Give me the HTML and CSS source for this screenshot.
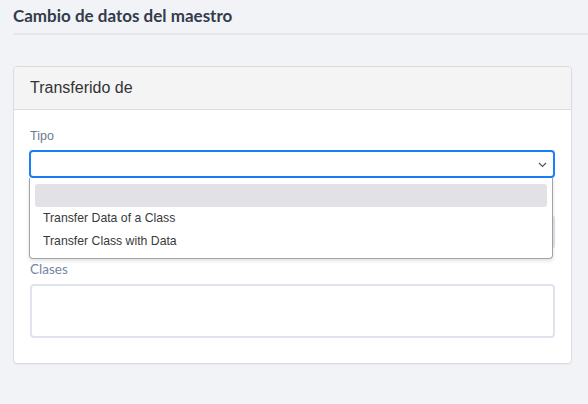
FILE: index.html
```html
<!DOCTYPE html>
<html lang="es">
<head>
<meta charset="utf-8">
<title>Cambio de datos del maestro</title>
<link rel="stylesheet" href="styles.css">
</head>
<body>
<div class="page-head">
  <h1 class="title">Cambio de datos del maestro</h1>
</div>
<div class="divider"></div>
<div class="card">
  <div class="card-header">Transferido de</div>
  <div class="card-body">
    <div class="group">
      <div class="label">Tipo</div>
      <div class="select-wrap">
        <div class="select">
          <svg class="chev" width="9" height="6" viewBox="0 0 9 6"><polyline points="1,1 4.5,4.5 8,1" fill="none" stroke="#555" stroke-width="1.2"/></svg>
        </div>
        <div class="menu">
          <div class="opt active">&nbsp;</div>
          <div class="opt">Transfer Data of a Class</div>
          <div class="opt">Transfer Class with Data</div>
        </div>
      </div>
    </div>
    <div class="group">
      <div class="label">Clase</div>
      <div class="input"></div>
    </div>
    <div class="group last">
      <div class="label lato">Clases</div>
      <div class="textbox"></div>
    </div>
  </div>
</div>
</body>
</html>
```
FILE: styles.css
```css
html, body { margin: 0; padding: 0; }
body {
  background: #f2f3f7;
  width: 588px;
  height: 404px;
  overflow: hidden;
  font-family: "Liberation Sans", Arial, sans-serif;
}
.page-head { padding: 4px 0 0 13px; height: 29px; }
.title {
  margin: 0;
  font-family: Lato, "Liberation Sans", sans-serif;
  font-weight: 700;
  font-size: 17px;
  line-height: 24px;
  color: #323c4b;
}
.divider { margin-left: 13px; height: 2px; background: #e6e7eb; }
.card {
  margin: 31px 16px 0 13px;
  background: #fff;
  border: 1px solid #dcdcdf;
  border-radius: 4px;
  box-shadow: 0 1px 1px rgba(0,0,0,0.04);
}
.card-header {
  height: 42px;
  line-height: 42px;
  padding-left: 16px;
  font-size: 16px;
  color: #333;
  background: #f4f4f5;
  border-bottom: 1px solid #dcdcdf;
  border-radius: 4px 4px 0 0;
}
.card-body { padding: 18px 16px 25px 16px; }
.group { margin-bottom: 15px; }
.group.last { margin-bottom: 0; margin-top: -3px; }
.label {
  font-size: 12.5px;
  line-height: 16px;
  color: #6b7a8f;
  margin-bottom: 6px;
}
.label.lato {
  font-family: Lato, "Liberation Sans", sans-serif;
  font-size: 13.5px;
  color: #7486a3;
  margin-bottom: 7px;
}
.select-wrap { position: relative; margin-left: -1px; }
.select {
  height: 24px;
  border: 2px solid #1a7ef6;
  border-radius: 4px;
  background: #fff;
  display: flex;
  align-items: center;
  justify-content: flex-end;
  padding-right: 6px;
}
.chev { display: block; margin-top: 2px; }
.menu {
  position: absolute;
  top: 100%;
  left: 0;
  right: 2px;
  background: #fff;
  border: 1px solid #a3a3a6;
  border-top: none;
  border-radius: 0 0 4px 4px;
  padding: 6px 5px 5px 5px;
  box-shadow: 0 2px 4px rgba(0,0,0,0.12);
  z-index: 2;
}
.opt {
  height: 23px;
  line-height: 23px;
  padding-left: 8px;
  font-size: 12.25px;
  color: #3a3a3a;
  border-radius: 3px;
}
.opt.active { background: #e1e1e6; }
.input {
  height: 30px;
  border: 2px solid #dfe3ee;
  border-radius: 4px;
}
.textbox {
  height: 50px;
  border: 2px solid #dfe3ee;
  border-radius: 4px;
  background: #fff;
}
```
